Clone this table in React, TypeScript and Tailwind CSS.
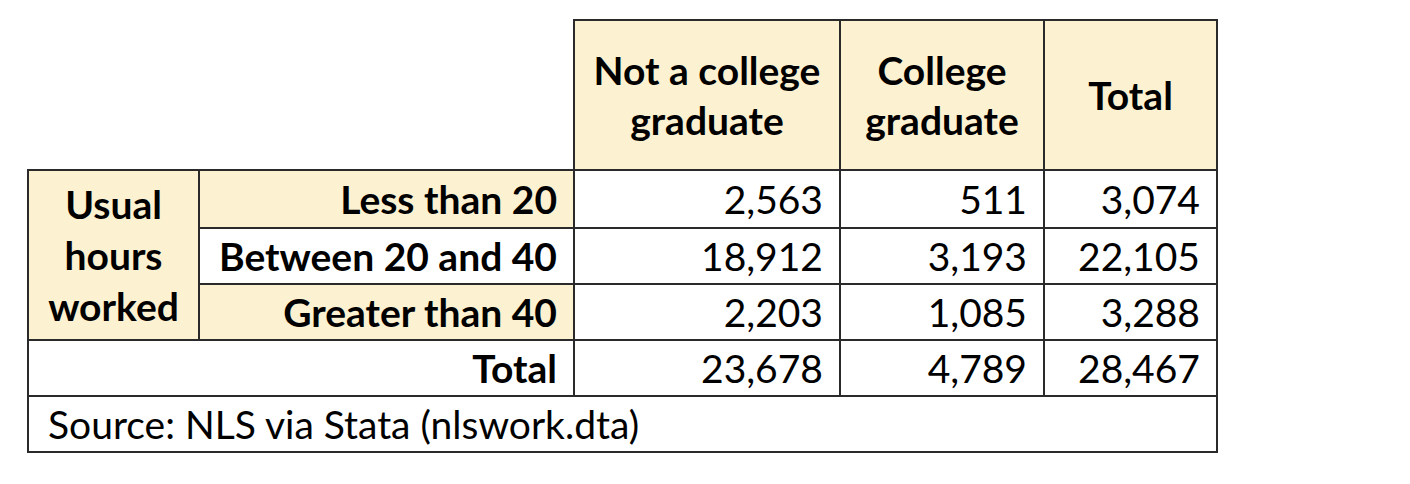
const rows = [
  { label: "Less than 20", shaded: true, values: ["2,563", "511", "3,074"] },
  { label: "Between 20 and 40", shaded: false, values: ["18,912", "3,193", "22,105"] },
  { label: "Greater than 40", shaded: true, values: ["2,203", "1,085", "3,288"] },
];

const totals = ["23,678", "4,789", "28,467"];

const cell = "border-2 border-[#2a2a2a]";
const head = "bg-[#fcf1d0]";

export default function App() {
  return (
    <div className="min-h-screen bg-white pl-[27px] pt-[19px] font-['Lato',sans-serif] text-[39px] text-black">
      <table className="table-fixed border-collapse">
        <colgroup>
          <col className="w-[171px]" />
          <col className="w-[375px]" />
          <col className="w-[266px]" />
          <col className="w-[204px]" />
          <col className="w-[173px]" />
        </colgroup>
        <thead>
          <tr className="h-[150px]">
            <th colSpan={2} />
            <th className={`${cell} ${head} px-2 text-center font-bold leading-[50px]`}>
              Not a college
              <br />
              graduate
            </th>
            <th className={`${cell} ${head} px-2 text-center font-bold leading-[50px]`}>
              College
              <br />
              graduate
            </th>
            <th className={`${cell} ${head} px-2 text-center font-bold`}>Total</th>
          </tr>
        </thead>
        <tbody>
          {rows.map((r, i) => (
            <tr key={r.label} className={i === 0 ? "h-[58px]" : "h-[56px]"}>
              {i === 0 && (
                <th
                  rowSpan={3}
                  className={`${cell} ${head} text-center font-bold leading-[51px]`}
                >
                  Usual
                  <br />
                  hours
                  <br />
                  worked
                </th>
              )}
              <th
                className={`${cell} ${r.shaded ? head : "bg-white"} pr-[16px] text-right font-bold leading-none`}
              >
                {r.label}
              </th>
              {r.values.map((v, j) => (
                <td key={j} className={`${cell} pr-[16px] text-right leading-none`}>
                  {v}
                </td>
              ))}
            </tr>
          ))}
          <tr className="h-[56px]">
            <th colSpan={2} className={`${cell} pr-[16px] text-right font-bold leading-none`}>
              Total
            </th>
            {totals.map((v, j) => (
              <td key={j} className={`${cell} pr-[16px] text-right leading-none`}>
                {v}
              </td>
            ))}
          </tr>
          <tr className="h-[56px]">
            <td colSpan={5} className={`${cell} pl-[19px] text-left leading-none`}>
              Source: NLS via Stata (nlswork.dta)
            </td>
          </tr>
        </tbody>
      </table>
    </div>
  );
}
